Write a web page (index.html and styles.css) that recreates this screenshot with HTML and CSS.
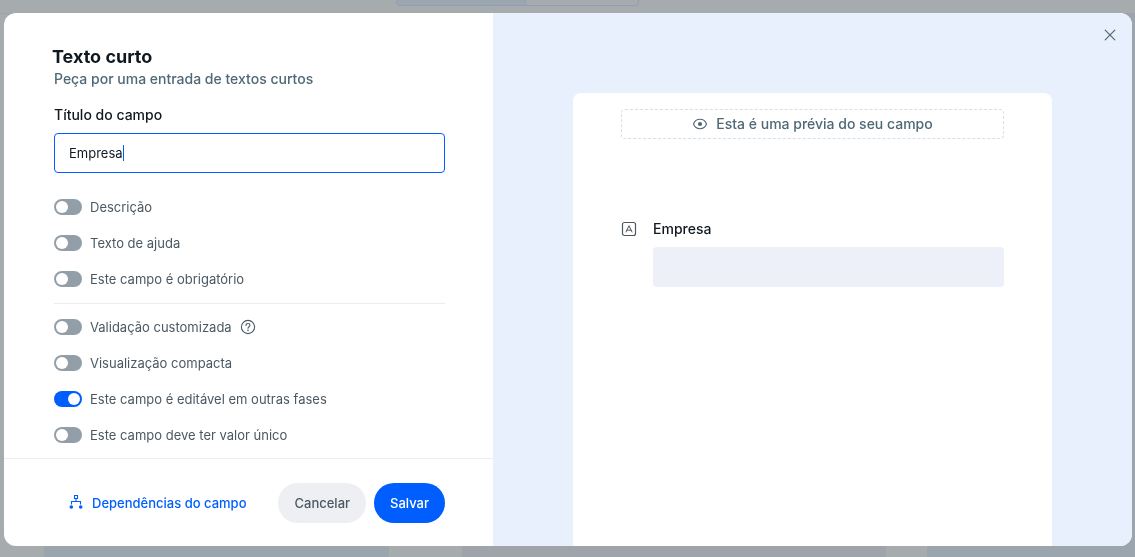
FILE: index.html
```html
<!DOCTYPE html>
<html lang="pt-BR">
<head>
<meta charset="utf-8">
<meta name="viewport" content="width=device-width, initial-scale=1">
<title>Texto curto</title>
<link rel="stylesheet" href="styles.css">
</head>
<body>
<div class="page" aria-hidden="true">
  <div class="page-bar"><div class="tabs"><span class="tab tab-active"></span><span class="tab"></span></div></div>
  <div class="board">
    <div class="lane lane-a"></div>
    <div class="lane lane-b"></div>
    <div class="lane lane-c"></div>
  </div>
</div>
<div class="overlay">
  <div class="modal" role="dialog" aria-modal="true" aria-labelledby="title">
    <form class="editor">
      <div class="editor-body">
        <header>
          <h1 class="title" id="title">Texto curto</h1>
          <p class="subtitle">Peça por uma entrada de textos curtos</p>
        </header>
        <div class="field">
          <label class="label" for="name">Título do campo</label>
          <div class="textbox"><input class="textbox-input" id="name" type="text" value="Empresa"><span class="caret"></span></div>
        </div>
        <div class="options">
          <label class="option"><input class="switch" type="checkbox">Descrição</label>
          <label class="option"><input class="switch" type="checkbox">Texto de ajuda</label>
          <label class="option"><input class="switch" type="checkbox">Este campo é obrigatório</label>
        </div>
        <div class="options options-more">
          <div class="option">
            <label class="option"><input class="switch" type="checkbox">Validação customizada</label>
            <button class="icon-button" type="button" aria-label="Ajuda">
              <svg width="16" height="16" viewBox="0 0 16 16" fill="none" stroke="currentColor" stroke-width="1.1" stroke-linecap="round"><circle cx="8" cy="8" r="6.6"/><path d="M6 6.4C6 5.2 6.9 4.5 8 4.5s2 .8 2 1.8c0 1.4-2 1.5-2 3"/><circle cx="8" cy="11.3" r=".3"/></svg>
            </button>
          </div>
          <label class="option"><input class="switch" type="checkbox">Visualização compacta</label>
          <label class="option"><input class="switch" type="checkbox" checked>Este campo é editável em outras fases</label>
          <label class="option"><input class="switch" type="checkbox">Este campo deve ter valor único</label>
        </div>
      </div>
      <footer class="actions">
        <a class="link" href="#dependencias">
          <svg class="link-icon" width="16" height="16" viewBox="0 0 16 16" fill="none" stroke="currentColor"><path d="M6.500 .5h3v3h-3zM8 3.500v3M3.500 9.500v-3h9v3" stroke-width="1.100"/><g fill="currentColor" stroke="none"><circle cx="3.300" cy="12" r="1.800"/><circle cx="12.700" cy="12" r="1.800"/></g></svg>
          Dependências do campo
        </a>
        <button class="button" type="button">Cancelar</button>
        <button class="button button-primary" type="submit">Salvar</button>
      </footer>
    </form>
    <section class="preview">
      <button class="icon-button close" type="button" aria-label="Fechar">
        <svg width="16" height="16" viewBox="0 0 16 16" fill="none" stroke="currentColor" stroke-width="1.200" stroke-linecap="round"><path d="M3.200 3.200l9.600 9.600M12.800 3.200l-9.600 9.600"/></svg>
      </button>
      <div class="card">
        <div class="notice">
          <svg width="16" height="16" viewBox="0 0 16 16" fill="none" stroke="currentColor" stroke-width="1.100"><path d="M1.500 8C2.600 5 5 3.300 8 3.300S13.400 5 14.500 8C13.400 11 11 12.700 8 12.700S2.600 11 1.500 8z"/><circle cx="8" cy="8" r="2.100" fill="currentColor" stroke="none"/></svg>
          Esta é uma prévia do seu campo
        </div>
        <div class="sample">
          <svg width="16" height="16" viewBox="0 0 16 16" fill="none" stroke="currentColor" stroke-linejoin="round" stroke-linecap="round"><rect x="1.500" y="1.500" width="13" height="13" rx="2" stroke-width="1.200"/><path d="M5 11l3-6.300L11 11M6 9.200h4"/></svg>
          <label class="label" for="sample">Empresa</label>
          <input class="sample-input" id="sample" type="text">
        </div>
      </div>
    </section>
  </div>
</div>
</body>
</html>
```

FILE: styles.css
```css
* { box-sizing: border-box; }
body {
  margin: 0;
  font-family: Inter, "Liberation Sans", sans-serif;
  font-size: 13px;
  line-height: 16px;
  color: #4b5862;
  background: #a6abad;
}
h1, p { margin: 0; }
button, input { font: inherit; color: inherit; margin: 0; }

.page { display: flex; flex-direction: column; height: 100vh; overflow: hidden; }
.page-bar { display: flex; justify-content: center; padding-right: 101px; height: 14px; flex: none; border-bottom: 1px solid #9ea4a8; }
.tabs { display: flex; width: 243px; height: 6px; border: 1px solid #8f9fb7; border-top: 0; border-radius: 0 0 4px 4px; }
.tab { flex: 112; }
.tab-active { flex: 130; border-right: 1px solid #8f9fb7; background: #9ca6ae; }
.board { display: flex; flex: 1; padding-left: 44px; }
.lane-a { flex: 345; margin-right: 73px; background: #9ba5ae; }
.lane-b { flex: 424; margin-right: 41px; background: #9fa4ab; }
.lane-c { flex: 208; background: #9ba5ae; }

.overlay { position: fixed; inset: 0; display: flex; padding: 13px 3px 11px 4px; }
.modal { display: grid; grid-template-columns: 489fr 639fr; flex: 1; border-radius: 12px; overflow: hidden; background: #fff; }

.editor { display: flex; flex-direction: column; min-width: 0; }
.editor-body { flex: 1; padding: 32px 48px 0 50px; }
.title { margin-left: -2px; font-size: 18px; line-height: 24px; font-weight: 700; color: #101820; }
.subtitle { font-size: 14px; line-height: 20px; font-weight: 500; color: #4f6876; }
.field { display: flex; flex-direction: column; gap: 8px; padding-top: 16px; }
.label { font-size: 14px; line-height: 20px; font-weight: 500; color: #101820; }
.textbox { display: flex; align-items: center; height: 40px; padding: 0 14px; border: 1px solid #005eff; border-radius: 4px; }
.textbox-input { field-sizing: content; padding: 0; border: 0; outline: 0; background: none; color: #101820; caret-color: transparent; }
.caret { width: 1px; height: 16px; background: #005eff; }

.options { display: flex; flex-direction: column; gap: 20px; padding: 26px 0 16px; }
.options-more { padding: 15px 0 8px; border-top: 1px solid #e9ecf2; }
.option { display: flex; align-items: center; gap: 8px; }
.switch { appearance: none; display: flex; flex: none; width: 28px; height: 16px; padding: 2px; border-radius: 8px; background: #929ea8; }
.switch::before { content: ""; width: 12px; height: 12px; border-radius: 50%; background: #fff; }
.switch:checked { justify-content: flex-end; background: #005eff; }
.icon-button { display: flex; padding: 0; border: 0; background: none; color: #4b5862; }

.actions { display: flex; align-items: center; justify-content: flex-end; gap: 8px; height: 88px; padding: 0 48px; border-top: 1px solid #e9ecf2; }
.link { display: flex; align-items: center; gap: 8px; margin-right: 24px; color: #005eff; font-weight: 500; text-decoration: none; white-space: nowrap; }
.link-icon { flex: none; }
.button { height: 40px; padding: 0 16px; border: 0; border-radius: 20px; background: #edeff3; font-weight: 500; }
.button-primary { background: #005eff; color: #fff; }

.preview { position: relative; display: flex; min-width: 0; padding: 80px 80px 0; background: #e8f0fe; }
.close { position: absolute; top: 14px; right: 14px; color: #4f6876; }
.card { flex: 1; padding: 16px 48px; border-radius: 8px 8px 0 0; background: #fff; }
.notice { display: flex; align-items: center; justify-content: center; gap: 8px; height: 30px; border: 1px dashed #d3e0ea; border-radius: 4px; font-size: 14px; font-weight: 500; color: #4f6876; }
.sample { display: grid; grid-template-columns: 16px 1fr; align-items: center; gap: 8px 16px; padding-top: 80px; }
.sample-input { grid-column: 2; height: 40px; min-width: 0; padding: 0 16px; border: 0; border-radius: 4px; background: #edf0f9; }
```
